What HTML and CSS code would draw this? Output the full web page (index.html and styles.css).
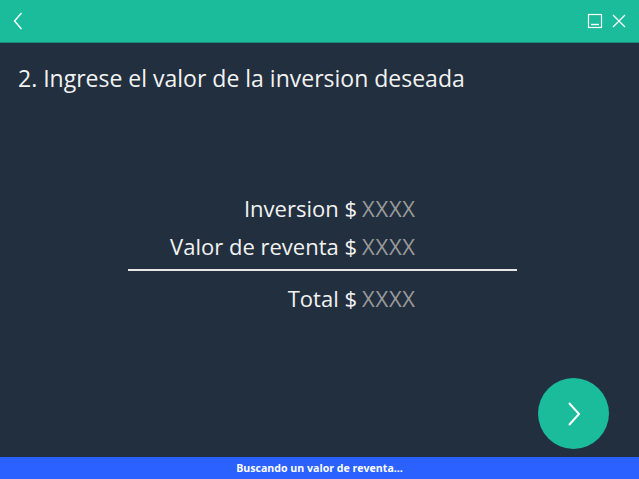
FILE: index.html
```html
<!DOCTYPE html>
<html lang="es">
<head>
<meta charset="utf-8">
<title>Inversion</title>
<link rel="stylesheet" href="styles.css">
</head>
<body>
<div class="app">
  <header class="topbar">
    <button class="icon-btn back" aria-label="Volver">
      <svg width="12" height="20" viewBox="0 0 12 20"><polyline points="9.5,2 2.5,10 9.5,18" fill="none" stroke="#ffffff" stroke-width="1.4"/></svg>
    </button>
    <div class="win-controls">
      <svg class="win-icon" width="16" height="16" viewBox="0 0 16 16"><rect x="1.5" y="1.5" width="13" height="13" fill="none" stroke="#ffffff" stroke-width="1.2"/><line x1="4" y1="11.5" x2="12" y2="11.5" stroke="#ffffff" stroke-width="1.4"/></svg>
      <svg class="win-icon" width="16" height="16" viewBox="0 0 16 16"><line x1="2" y1="2" x2="14" y2="14" stroke="#ffffff" stroke-width="1.3"/><line x1="14" y1="2" x2="2" y2="14" stroke="#ffffff" stroke-width="1.3"/></svg>
    </div>
  </header>
  <main class="content">
    <h1 class="title">2. Ingrese el valor de la inversion deseada</h1>
    <div class="calc">
      <div class="row"><span class="label">Inversion $</span><span class="value">XXXX</span></div>
      <div class="row"><span class="label">Valor de reventa $</span><span class="value">XXXX</span></div>
      <div class="divider"></div>
      <div class="row"><span class="label">Total $</span><span class="value">XXXX</span></div>
    </div>
    <button class="fab" aria-label="Siguiente">
      <svg width="16" height="26" viewBox="0 0 16 26"><polyline points="3,2 13,13 3,24" fill="none" stroke="#ffffff" stroke-width="2"/></svg>
    </button>
  </main>
  <footer class="status">Buscando un valor de reventa...</footer>
</div>
</body>
</html>
```
FILE: styles.css
```css
html, body {
  margin: 0;
  padding: 0;
}
body {
  background: #222f3e;
  font-family: "Open Sans", "Noto Sans", sans-serif;
  color: #f2f2f2;
}
.app {
  display: flex;
  flex-direction: column;
  width: 639px;
  height: 479px;
  overflow: hidden;
}
.topbar {
  height: 42px;
  flex: none;
  background: #1abc9c;
  border-bottom: 1px solid #178f7a;
  display: flex;
  align-items: center;
  justify-content: space-between;
  padding: 0 12px 0 12px;
}
.icon-btn {
  background: none;
  border: none;
  padding: 0;
  display: flex;
}
.win-controls {
  display: flex;
  gap: 8px;
  align-items: center;
}
.win-icon {
  display: block;
}
.content {
  flex: 1;
  position: relative;
  padding: 0 0 0 18px;
}
.title {
  margin: 20px 0 0 0;
  font-weight: 400;
  font-size: 23px;
  line-height: 30px;
  color: #f2f2f2;
}
.calc {
  margin: 96px 0 0 110px;
  width: 389px;
}
.row {
  display: grid;
  grid-template-columns: 229px 1fr;
  column-gap: 5px;
  font-size: 22px;
  line-height: 38px;
}
.label {
  text-align: right;
  color: #f2f2f2;
}
.value {
  color: #9a9a9a;
  letter-spacing: 0.75px;
}
.divider {
  height: 2px;
  background: #e6e6e6;
  margin: 4px 0 8px 0;
}
.fab {
  position: absolute;
  right: 30px;
  bottom: 8px;
  width: 71px;
  height: 71px;
  border-radius: 50%;
  border: none;
  background: #1abc9c;
  display: flex;
  align-items: center;
  justify-content: center;
  padding: 0;
}
.status {
  height: 22px;
  flex: none;
  background: #2b62ff;
  color: #ffffff;
  font-size: 10.6px;
  font-weight: 700;
  text-align: center;
  line-height: 22px;
}
```
